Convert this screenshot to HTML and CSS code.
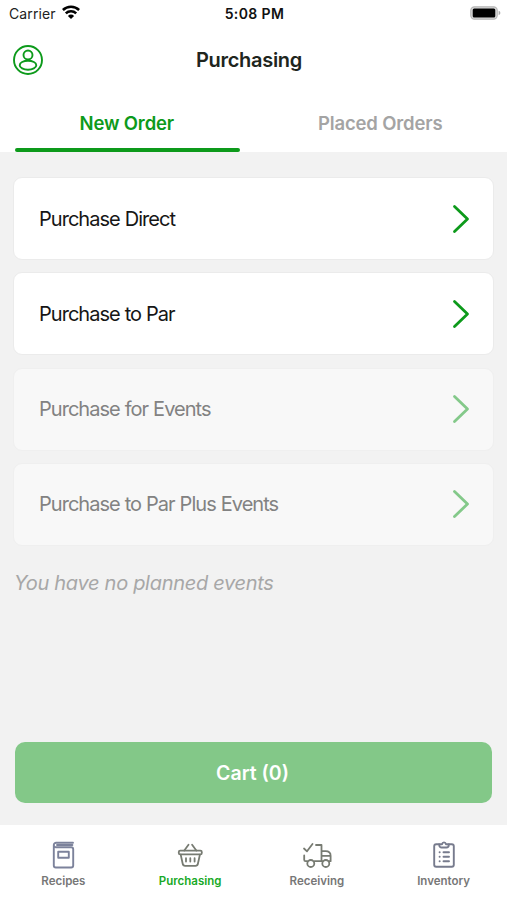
FILE: index.html
```html
<!DOCTYPE html>
<html lang="en">
<head>
<meta charset="utf-8">
<meta name="viewport" content="width=device-width, initial-scale=1">
<title>Purchasing</title>
<link rel="stylesheet" href="styles.css">
</head>
<body>
<div class="app">
  <div class="status">
    <div class="status-left">
      <span class="carrier">Carrier</span>
      <svg class="wifi" width="18" height="14" viewBox="0 0 18 14" fill="none" stroke="#000" stroke-width="2.5"><path d="M.9 5a11.5 11.5 0 0 1 16.2 0M3.8 8.4a7.4 7.4 0 0 1 10.4 0"/><path d="M9 14 5.9 10.9a4.4 4.4 0 0 1 6.2 0z" fill="#000" stroke="none"/></svg>
    </div>
    <span class="time">5:08 PM</span>
    <svg class="battery" width="31" height="14" viewBox="0 0 31 14"><rect x=".8" y=".8" width="26.4" height="12.4" rx="3.6" fill="#ddd" stroke="#b5b5b5" stroke-width="1.2"/><rect x="2.7" y="2.5" width="22.6" height="9" rx="1.5" fill="#000"/><path d="M28.6 4.8q1.8.6 1.8 2.2t-1.8 2.2z" fill="#aaa"/></svg>
  </div>
  <header class="header">
    <svg class="profile" width="30" height="30" viewBox="0 0 30 30" fill="none" stroke="#0d9a1b" stroke-width="1.9"><circle cx="15" cy="15" r="14"/><circle cx="15" cy="10" r="4.5"/><ellipse cx="15" cy="20.2" rx="8.3" ry="4.5"/></svg>
    <h1 class="title">Purchasing</h1>
  </header>
  <nav class="tabs">
    <div class="tab tab-active"><span>New Order</span></div>
    <div class="tab"><span>Placed Orders</span></div>
  </nav>
  <main class="content">
    <div class="card"><span>Purchase Direct</span><svg class="chevron" width="18" height="30" viewBox="0 0 18 30"><path d="M2.5 2.5 15.5 15 2.5 27.5"/></svg></div>
    <div class="card"><span>Purchase to Par</span><svg class="chevron" width="18" height="30" viewBox="0 0 18 30"><path d="M2.5 2.5 15.5 15 2.5 27.5"/></svg></div>
    <div class="card card-disabled"><span>Purchase for Events</span><svg class="chevron" width="18" height="30" viewBox="0 0 18 30"><path d="M2.5 2.5 15.5 15 2.5 27.5"/></svg></div>
    <div class="card card-disabled"><span>Purchase to Par Plus Events</span><svg class="chevron" width="18" height="30" viewBox="0 0 18 30"><path d="M2.5 2.5 15.5 15 2.5 27.5"/></svg></div>
    <p class="note">You have no planned events</p>
    <button class="cart" disabled>Cart (0)</button>
  </main>
  <footer class="bottom-nav">
    <div class="nav-item">
      <svg width="30" height="30" viewBox="0 0 30 30" fill="none" stroke="#7c829b" stroke-width="1.9" stroke-linecap="round" stroke-linejoin="round"><path d="M25 2.7H8.2a2.4 2.4 0 0 0-2.4 2.4v20.4a2 2 0 0 0 2 2h15.4a2 2 0 0 0 2-2V9.3a2 2 0 0 0-2-2H8a2.2 2.2 0 0 1-2.2-2.2M9 5h15.4"/><path d="M10.2 11.8h10.6v6H10.2z"/></svg>
      <span>Recipes</span>
    </div>
    <div class="nav-item nav-active">
      <svg width="30" height="30" viewBox="0 0 30 30" fill="none" stroke="#777b72" stroke-width="1.8" stroke-linecap="round" stroke-linejoin="round"><rect x="3.8" y="10.7" width="23" height="3.6" rx="1.4"/><path d="m9.3 10.5 4.2-5.7M21.3 10.5l-4.2-5.7M5.7 14.6l2 9.2q.4 2 2.4 2h10.4q2 0 2.4-2l2-9.2"/><path d="M11 18.2v3.3M15.3 18.2v3.3M19.6 18.2v3.3"/></svg>
      <span>Purchasing</span>
    </div>
    <div class="nav-item">
      <svg width="30" height="30" viewBox="0 0 30 30" fill="none" stroke="#777b72" stroke-width="1.8" stroke-linecap="round" stroke-linejoin="round"><path d="m2 8.5 3 2.8L10.5 4M14 5h5.5v16.2M2.2 15.5v4.3q0 1.4 1.4 1.4h1.7M12.5 21.2h8.2M27 21.2h1.6v-5.4q0-4.6-5-4.6h-4M19.7 15.8h8.7"/><circle cx="8.8" cy="23.5" r="3.5"/><circle cx="23.8" cy="23.5" r="3.5"/></svg>
      <span>Receiving</span>
    </div>
    <div class="nav-item">
      <svg width="30" height="30" viewBox="0 0 30 30" fill="none" stroke="#777b8d" stroke-width="1.9" stroke-linecap="round" stroke-linejoin="round"><path d="M10 4.2H7.2a2 2 0 0 0-2 2v18.6a2 2 0 0 0 2 2h15.6a2 2 0 0 0 2-2V6.2a2 2 0 0 0-2-2H20"/><path d="M10.3 4.2H13q.4-1.8 2-1.8t2 1.8h2.7v1.1a2.2 2.2 0 0 1-2.2 2.2h-5a2.2 2.2 0 0 1-2.2-2.2zM14.5 12.3H20M14.5 16.8H20M14.5 21.3H20M10.6 12.3h.1M10.6 16.8h.1M10.6 21.3h.1"/></svg>
      <span>Inventory</span>
    </div>
  </footer>
</div>
</body>
</html>
```

FILE: styles.css
```css
* { box-sizing: border-box; }
body { margin: 0; font-family: Inter, "Liberation Sans", sans-serif; background: #fff; }
.app { width: 507px; height: 900px; display: flex; flex-direction: column; overflow: hidden; }
.status { height: 28px; display: grid; grid-template-columns: 1fr auto 1fr; align-items: center; padding: 0 6px 2px 9px; font-size: 14px; color: #111; }
.status-left { display: flex; align-items: center; gap: 6px; }
.carrier { letter-spacing: .1px; color: #222; }
.wifi { margin-top: -2px; }
.time { font-weight: 600; letter-spacing: .4px; margin-right: 1px; }
.battery { justify-self: end; }
.header { height: 64px; display: grid; grid-template-columns: 30px 1fr 30px; align-items: center; padding: 0 22px 0 13px; }
.title { margin: 0; text-align: center; font-size: 20px; font-weight: 600; letter-spacing: -.3px; color: #20251d; }
.tabs { height: 60px; display: grid; grid-template-columns: 1fr 1fr; }
.tab { margin: 0 14px 0 15px; display: flex; align-items: center; justify-content: center; font-size: 18.5px; font-weight: 600; letter-spacing: -.15px; color: #a4a4a4; padding: 6px 1px 0 0; border-bottom: 4px solid transparent; }
.tab-active { color: #0d9a1b; position: relative; }
.tab-active::after { content: ""; position: absolute; left: 0; right: 0; bottom: -4px; height: 4px; border-radius: 2px; background: #0d9a1b; }
.content { flex: 1; display: flex; flex-direction: column; background: #f2f2f2; padding: 25px 13px 22px; }
.card { height: 83px; flex: none; margin-bottom: 12.3px; display: flex; align-items: center; justify-content: space-between; padding: 0 23px 0 25px; background: #fff; border: 1px solid #ebebeb; border-radius: 9px; font-size: 20px; letter-spacing: -.97px; word-spacing: .3px; color: #161616; }
.card-disabled { background: #f8f8f8; border-color: #efefef; color: #828282; }
.chevron { fill: none; stroke: #0d9a1b; stroke-width: 2.8; stroke-linecap: round; stroke-linejoin: round; }
.card-disabled .chevron { stroke: #84c98a; }
.note { margin: 12px 1px 0; font-size: 20px; line-height: 26px; font-style: italic; letter-spacing: -.3px; color: #a7a7a7; }
.cart { margin: auto 2px 0; height: 61px; border: 0; border-radius: 10px; background: #83c888; color: #fff; font-family: inherit; font-size: 19.5px; font-weight: 600; padding: 0 2px 0 0; }
.bottom-nav { height: 75px; flex: none; display: grid; grid-template-columns: repeat(4, 1fr); padding-top: 15px; background: #fff; }
.nav-item { display: flex; flex-direction: column; align-items: center; font-size: 11.5px; font-weight: 600; line-height: 16px; color: #777; gap: 3px; }
.nav-active { color: #18a927; }
```
